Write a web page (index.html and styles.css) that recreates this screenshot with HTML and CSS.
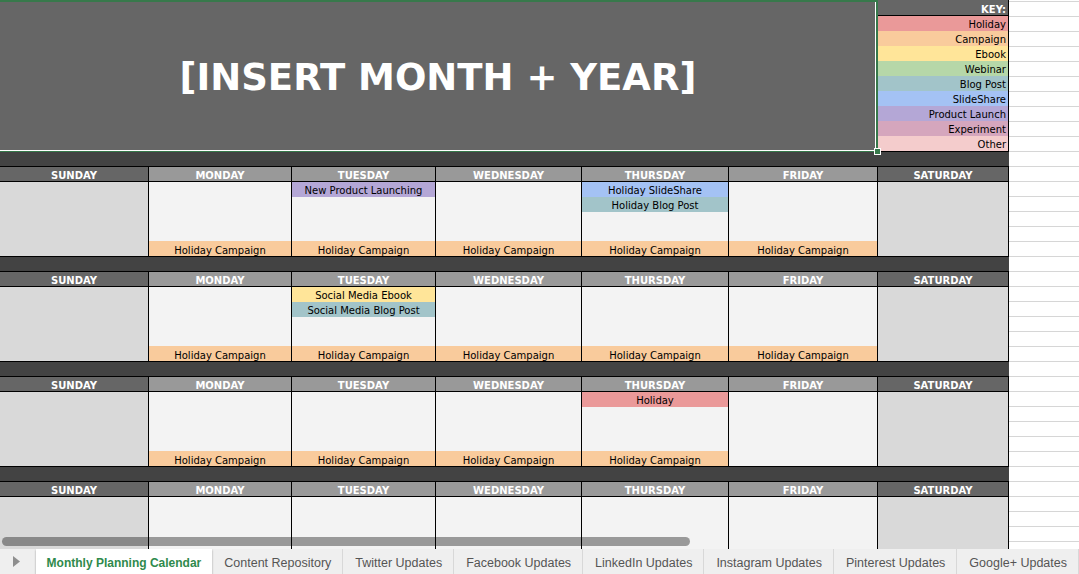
FILE: index.html
```html
<!DOCTYPE html>
<html>

<head>
    <title>Monthly Planning Calendar</title>
    <link rel="stylesheet" href="styles.css">
</head>

<body>
    <div class="sheet">
        <div class="top">
            <div class="title">
                [INSERT MONTH + YEAR]
                <span class="handle"></span>
            </div>
            <div class="key">
                <div class="key-head">KEY:</div>
                <div class="key-item holiday">Holiday</div>
                <div class="key-item campaign">Campaign</div>
                <div class="key-item ebook">Ebook</div>
                <div class="key-item webinar">Webinar</div>
                <div class="key-item blog">Blog Post</div>
                <div class="key-item slideshare">SlideShare</div>
                <div class="key-item launch">Product Launch</div>
                <div class="key-item experiment">Experiment</div>
                <div class="key-item other">Other</div>
            </div>
        </div>
        <div class="bar"></div>

        <!-- week 1 -->
        <div class="week">
            <div class="days">
                <div class="day weekend">SUNDAY</div>
                <div class="day">MONDAY</div>
                <div class="day">TUESDAY</div>
                <div class="day">WEDNESDAY</div>
                <div class="day">THURSDAY</div>
                <div class="day">FRIDAY</div>
                <div class="day weekend">SATURDAY</div>
            </div>
            <div class="cells">
                <div class="cell weekend"></div>
                <div class="cell">
                    <div class="event campaign bottom">Holiday Campaign</div>
                </div>
                <div class="cell">
                    <div class="event launch">New Product Launching</div>
                    <div class="event campaign bottom">Holiday Campaign</div>
                </div>
                <div class="cell">
                    <div class="event campaign bottom">Holiday Campaign</div>
                </div>
                <div class="cell">
                    <div class="event slideshare">Holiday SlideShare</div>
                    <div class="event blog">Holiday Blog Post</div>
                    <div class="event campaign bottom">Holiday Campaign</div>
                </div>
                <div class="cell">
                    <div class="event campaign bottom">Holiday Campaign</div>
                </div>
                <div class="cell weekend"></div>
            </div>
        </div>
        <div class="bar"></div>

        <!-- week 2 -->
        <div class="week">
            <div class="days">
                <div class="day weekend">SUNDAY</div>
                <div class="day">MONDAY</div>
                <div class="day">TUESDAY</div>
                <div class="day">WEDNESDAY</div>
                <div class="day">THURSDAY</div>
                <div class="day">FRIDAY</div>
                <div class="day weekend">SATURDAY</div>
            </div>
            <div class="cells">
                <div class="cell weekend"></div>
                <div class="cell">
                    <div class="event campaign bottom">Holiday Campaign</div>
                </div>
                <div class="cell">
                    <div class="event ebook">Social Media Ebook</div>
                    <div class="event blog">Social Media Blog Post</div>
                    <div class="event campaign bottom">Holiday Campaign</div>
                </div>
                <div class="cell">
                    <div class="event campaign bottom">Holiday Campaign</div>
                </div>
                <div class="cell">
                    <div class="event campaign bottom">Holiday Campaign</div>
                </div>
                <div class="cell">
                    <div class="event campaign bottom">Holiday Campaign</div>
                </div>
                <div class="cell weekend"></div>
            </div>
        </div>
        <div class="bar"></div>

        <!-- week 3 -->
        <div class="week">
            <div class="days">
                <div class="day weekend">SUNDAY</div>
                <div class="day">MONDAY</div>
                <div class="day">TUESDAY</div>
                <div class="day">WEDNESDAY</div>
                <div class="day">THURSDAY</div>
                <div class="day">FRIDAY</div>
                <div class="day weekend">SATURDAY</div>
            </div>
            <div class="cells">
                <div class="cell weekend"></div>
                <div class="cell">
                    <div class="event campaign bottom">Holiday Campaign</div>
                </div>
                <div class="cell">
                    <div class="event campaign bottom">Holiday Campaign</div>
                </div>
                <div class="cell">
                    <div class="event campaign bottom">Holiday Campaign</div>
                </div>
                <div class="cell">
                    <div class="event holiday">Holiday</div>
                    <div class="event campaign bottom">Holiday Campaign</div>
                </div>
                <div class="cell"></div>
                <div class="cell weekend"></div>
            </div>
        </div>
        <div class="bar"></div>

        <!-- week 4 -->
        <div class="week">
            <div class="days">
                <div class="day weekend">SUNDAY</div>
                <div class="day">MONDAY</div>
                <div class="day">TUESDAY</div>
                <div class="day">WEDNESDAY</div>
                <div class="day">THURSDAY</div>
                <div class="day">FRIDAY</div>
                <div class="day weekend">SATURDAY</div>
            </div>
            <div class="cells">
                <div class="cell weekend"></div>
                <div class="cell"></div>
                <div class="cell"></div>
                <div class="cell"></div>
                <div class="cell"></div>
                <div class="cell"></div>
                <div class="cell weekend"></div>
            </div>
        </div>

        <div class="scrollbar"></div>
    </div>

    <div class="tabs">
        <div class="tab-arrow">
            <svg width="7" height="11" viewBox="0 0 7 11"><path d="M0 0 L7 5.5 L0 11 Z" fill="#8e8e8e"/></svg>
        </div>
        <div class="tab active">Monthly Planning Calendar</div>
        <div class="tab">Content Repository</div>
        <div class="tab">Twitter Updates</div>
        <div class="tab">Facebook Updates</div>
        <div class="tab">LinkedIn Updates</div>
        <div class="tab">Instagram Updates</div>
        <div class="tab">Pinterest Updates</div>
        <div class="tab">Google+ Updates</div>
    </div>
</body>

</html>
```

FILE: styles.css
```css
body {
    margin: 0;
    width: 1079px;
    height: 574px;
    overflow: hidden;
    display: flex;
    flex-direction: column;
    font-family: "DejaVu Sans", Verdana, sans-serif;
    background-color: #fff;
}

.sheet {
    flex: 1;
    position: relative;
    overflow: hidden;
    /* grid lines of the empty columns on the right */
    background: repeating-linear-gradient(to bottom,
            #fff 0, #fff 1px,
            #d6d6d6 1px, #d6d6d6 2px,
            #fff 2px, #fff 15px);
}

/* title + key */

.top {
    display: flex;
    height: 152px;
}

.title {
    position: relative;
    box-sizing: border-box;
    width: 878px;
    height: 152px;
    display: flex;
    align-items: center;
    justify-content: center;
    padding-top: 1px;
    background-color: #666;
    color: #fff;
    font-size: 37px;
    font-weight: bold;
    border-top: 2px solid #37794b;
    border-right: 2px solid #37794b;
    border-bottom: 1px solid #37794b;
    box-shadow: inset -1px -1px 0 #fff;
}

.handle {
    position: absolute;
    right: -5px;
    bottom: -4px;
    box-sizing: border-box;
    width: 7px;
    height: 7px;
    background-color: #37794b;
    border: 1px solid #fff;
}

.key {
    box-sizing: border-box;
    width: 131px;
    border-right: 1px solid #000;
    border-bottom: 1px solid #000;
    font-size: 10px;
    text-align: right;
}

.key-head {
    box-sizing: border-box;
    height: 16px;
    padding: 4px 2px 0 0;
    line-height: 12px;
    background-color: #666;
    color: #fff;
    font-weight: bold;
    border-bottom: 1px solid #000;
}

.key-item {
    height: 15px;
    line-height: 18px;
    padding-right: 2px;
    color: #000;
    overflow: hidden;
}

/* calendar */

.bar {
    width: 1009px;
    height: 14px;
    background-color: #434343;
}

.week {
    width: 1009px;
    border-top: 1px solid #000;
}

.days,
.cells {
    display: grid;
    grid-template-columns: 149px 143px 144px 146px 147px 149px 131px;
    box-sizing: border-box;
    border-bottom: 1px solid #000;
}

.days {
    height: 15px;
}

.cells {
    height: 75px;
}

.day {
    box-sizing: border-box;
    height: 14px;
    padding-top: 3px;
    line-height: 11px;
    background-color: #999;
    color: #fff;
    font-size: 10px;
    font-weight: bold;
    text-align: center;
    border-right: 1px solid #000;
}

.cell {
    display: flex;
    flex-direction: column;
    background-color: #f3f3f3;
    border-right: 1px solid #000;
}

.day.weekend {
    background-color: #666;
}

.cell.weekend {
    background-color: #d9d9d9;
}

.event {
    height: 15px;
    line-height: 17px;
    font-size: 10px;
    color: #000;
    text-align: center;
    white-space: nowrap;
    overflow: hidden;
}

.event.bottom {
    margin-top: auto;
    line-height: 19px;
}

/* category colours */

.holiday { background-color: #ea9999; }
.campaign { background-color: #f9cb9c; }
.ebook { background-color: #ffe599; }
.webinar { background-color: #b6d7a8; }
.blog { background-color: #a2c4c9; }
.slideshare { background-color: #a4c2f4; }
.launch { background-color: #b4a7d6; }
.experiment { background-color: #d5a6bd; }
.other { background-color: #f4cccc; }

.scrollbar {
    position: absolute;
    left: 2px;
    bottom: 3px;
    width: 688px;
    height: 9px;
    border-radius: 5px;
    background-color: rgba(0, 0, 0, 0.37);
}

/* sheet tabs */

.tabs {
    display: flex;
    height: 25px;
    background-color: #efefef;
    font-family: "Liberation Sans", Arial, sans-serif;
    font-size: 12.5px;
    color: #555;
}

.tab-arrow {
    width: 36px;
    display: flex;
    align-items: center;
    padding-left: 13px;
    box-sizing: border-box;
}

.tab {
    padding: 2px 11px 0 12px;
    line-height: 25px;
    border-right: 1px solid #d8d8d8;
    white-space: nowrap;
}

.tab.active {
    padding: 2px 11px 0 11px;
    background-color: #fff;
    color: #2f8a4c;
    font-size: 12px;
    font-weight: bold;
    border-right: none;
    box-shadow: 0 1px 2px rgba(0, 0, 0, 0.35);
}
```
